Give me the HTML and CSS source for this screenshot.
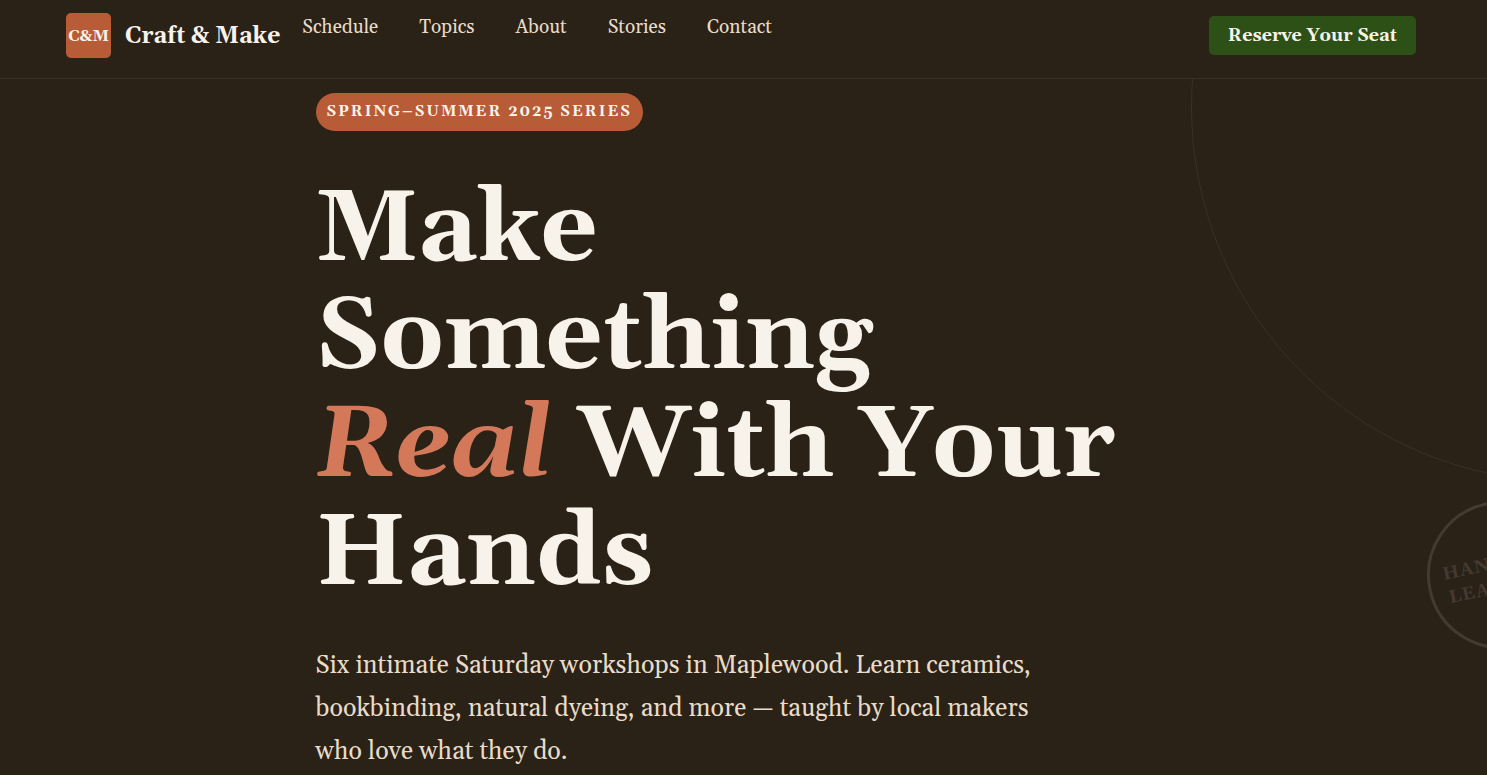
FILE: index.html
```
<!DOCTYPE html>
<html lang="en">
<head>
<meta charset="UTF-8">
<meta name="viewport" content="width=device-width, initial-scale=1.0">
<title>Craft &amp; Make</title>
<link rel="stylesheet" href="styles.css">
</head>
<body>
<header class="site-header">
    <a href="#" class="brand">
        <span class="brand-mark">C&amp;M</span>
        <span class="brand-name">Craft &amp; Make</span>
    </a>
    <nav class="main-nav">
        <a href="#schedule">Schedule</a>
        <a href="#topics">Topics</a>
        <a href="#about">About</a>
        <a href="#stories">Stories</a>
        <a href="#contact">Contact</a>
    </nav>
    <a href="#reserve" class="reserve-btn">Reserve Your Seat</a>
</header>

<main class="hero">
    <div class="hero-ring"></div>
    <div class="hero-stamp">HANDS-ON<br>LEARNING</div>
    <div class="hero-content">
        <span class="series-badge">Spring–Summer 2025 Series</span>
        <h1>Make Something <em>Real</em> With Your Hands</h1>
        <p>Six intimate Saturday workshops in Maplewood. Learn ceramics, bookbinding, natural dyeing, and more — taught by local makers who love what they do.</p>
    </div>
</main>
</body>
</html>
```

FILE: styles.css
```
* {
    box-sizing: border-box;
}
body {
    margin: 0;
    min-height: 100vh;
    display: flex;
    flex-direction: column;
    background-color: #2a2117;
    color: #f7f2ea;
    font-family: Georgia, Gelasio, "Liberation Serif", serif;
}
a {
    color: inherit;
    text-decoration: none;
}
.site-header {
    display: flex;
    align-items: center;
    padding: 13px 71px 20px 66px;
    border-bottom: 1px solid #393027;
}
.brand {
    display: flex;
    align-items: center;
    gap: 14px;
    font-weight: bold;
}
.brand-mark {
    display: flex;
    align-items: center;
    justify-content: center;
    width: 45px;
    height: 45px;
    border-radius: 5px;
    background-color: #b85c38;
    font-size: 16px;
}
.brand-name {
    padding-top: 2px;
    font-size: 23px;
    line-height: 32px;
}
.main-nav {
    display: flex;
    gap: 41px;
    margin-left: 22px;
    padding-bottom: 18px;
    color: #e8dcc8;
    font-size: 19px;
}
.reserve-btn {
    margin-left: auto;
    padding: 0 19px;
    border-radius: 5px;
    background-color: #2d5016;
    font-size: 18px;
    font-weight: bold;
    line-height: 39px;
}
.hero {
    position: relative;
    flex: 1;
    overflow: hidden;
    padding: 14px 24px 0;
}
.hero-content {
    max-width: 856px;
    margin: 0 auto;
}
.series-badge {
    display: inline-block;
    padding: 0 11px;
    border-radius: 19px;
    background-color: #b85c38;
    font-size: 15px;
    font-weight: bold;
    letter-spacing: 2px;
    line-height: 38px;
    text-transform: uppercase;
}
h1 {
    max-width: 810px;
    margin: 46px 0 36px;
    font-size: 100px;
    line-height: 108px;
}
h1 em {
    color: #d4785a;
}
.hero-content p {
    max-width: 730px;
    margin: 0;
    color: #e8dcc8;
    font-size: 25px;
    line-height: 43px;
}
.hero-ring {
    position: absolute;
    top: -347px;
    right: -454px;
    width: 750px;
    height: 750px;
    border: 1px solid #393027;
    border-radius: 50%;
}
.hero-stamp {
    position: absolute;
    top: 422px;
    right: -88px;
    display: flex;
    align-items: center;
    justify-content: center;
    width: 148px;
    height: 148px;
    padding-left: 3px;
    border: 3px solid #443a30;
    border-radius: 50%;
    color: #443a30;
    font-size: 18px;
    font-weight: bold;
    letter-spacing: 1px;
    line-height: 24px;
    text-align: center;
    transform: rotate(-12deg);
}
```
